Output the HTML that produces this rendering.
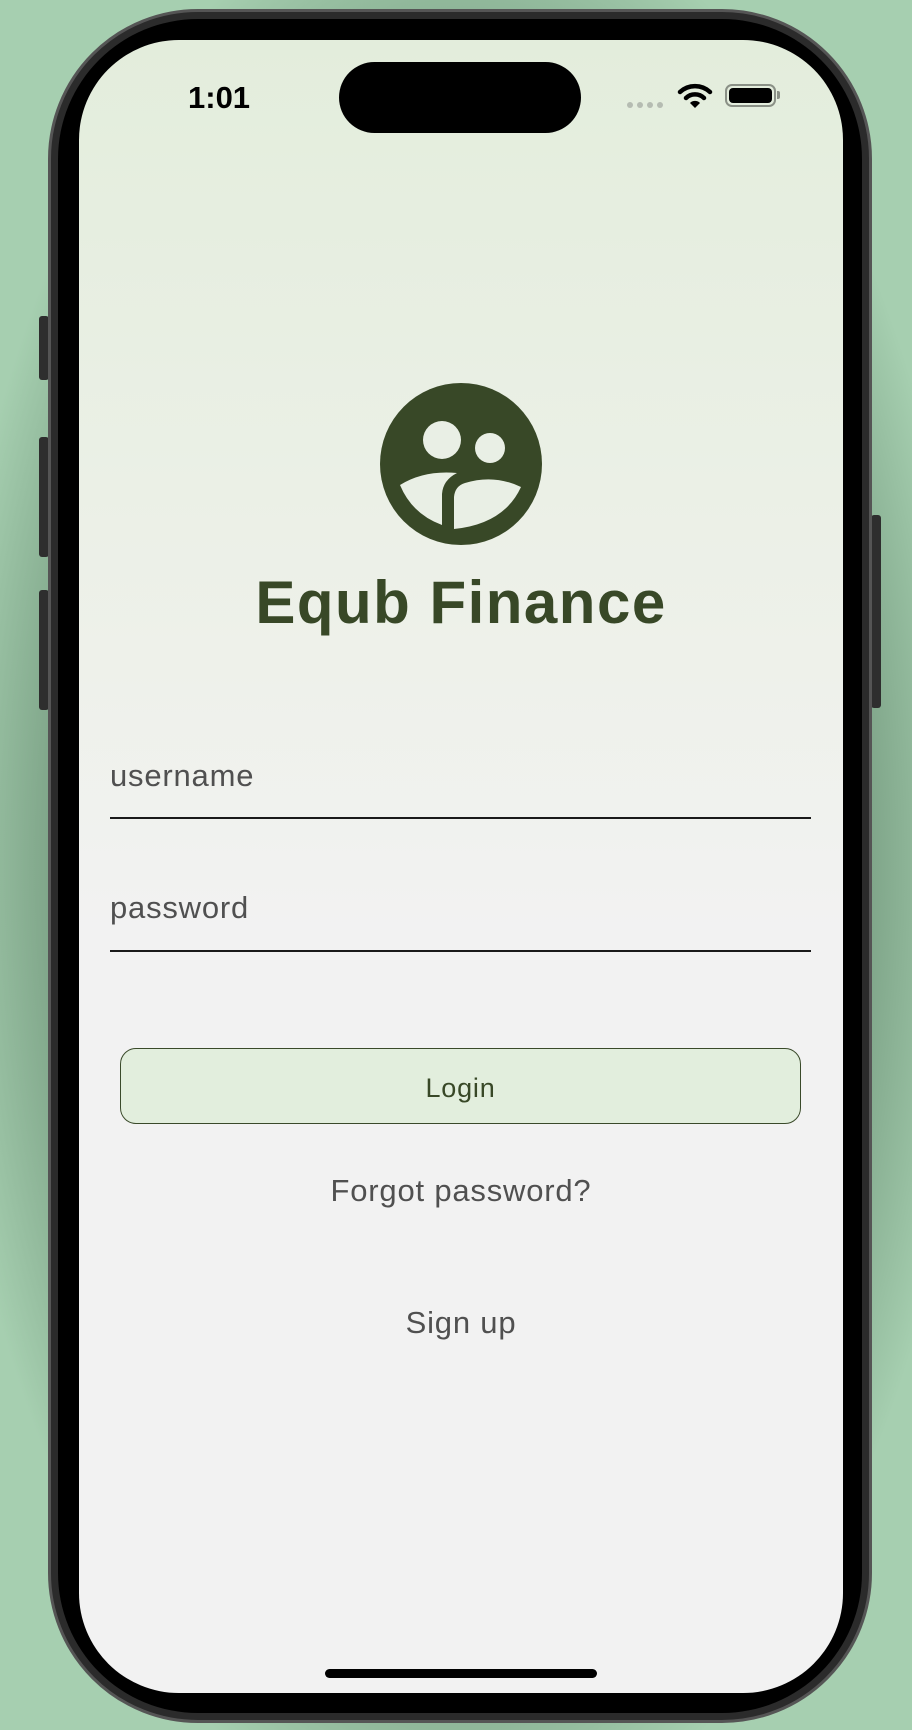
<!DOCTYPE html>
<html><head><meta charset="utf-8"><style>
*{margin:0;padding:0;box-sizing:border-box}
body{width:912px;height:1730px;overflow:hidden;position:relative;font-family:"Liberation Sans",sans-serif;
background:radial-gradient(ellipse 520px 980px at 460px 865px,#4f6a55 0%,#6f9479 70%,#a6cfb0 100%);}
.phone{position:absolute;left:48px;top:9px;width:824px;height:1714px;border-radius:150px;background:#2b2b2b;border:3px solid #555;}
.bezel{position:absolute;left:58px;top:19px;width:804px;height:1694px;border-radius:140px;background:#000;}
.screen{position:absolute;left:79px;top:40px;width:764px;height:1653px;border-radius:100px;overflow:hidden;
background:linear-gradient(#e3eddc 0px,#eef1ea 620px,#f2f2f2 900px,#f2f2f2 100%);}
.btn{position:absolute;background:#2e2e2e;border-radius:3px;}
.abs{position:absolute}
.island{left:260px;top:22px;width:242px;height:71px;border-radius:36px;background:#000}
.t{position:absolute;left:0;width:764px;text-align:center}
.lbl{font-size:31px;color:#505050;letter-spacing:0.8px}
</style></head><body>
<div class="btn" style="left:39px;top:316px;width:10px;height:64px"></div>
<div class="btn" style="left:39px;top:437px;width:10px;height:120px"></div>
<div class="btn" style="left:39px;top:590px;width:10px;height:120px"></div>
<div class="btn" style="left:871px;top:515px;width:10px;height:193px"></div>
<div class="phone"></div>
<div class="bezel"></div>
<div class="screen">
 <div class="abs island"></div>
 <div class="abs" style="left:109px;top:40px;font-size:31px;font-weight:bold;color:#000">1:01</div>
 <div class="abs" style="left:548px;top:62px;width:36px;height:6px;display:flex;gap:4px">
  <span style="width:6px;height:6px;border-radius:3px;background:#b5bcb2"></span><span style="width:6px;height:6px;border-radius:3px;background:#b5bcb2"></span><span style="width:6px;height:6px;border-radius:3px;background:#b5bcb2"></span><span style="width:6px;height:6px;border-radius:3px;background:#b5bcb2"></span></div>
 <svg class="abs" style="left:598px;top:42px" width="36" height="28" viewBox="0 0 36 28">
  <path d="M3 10 A22 22 0 0 1 33 10" stroke="#000" stroke-width="4.5" fill="none" stroke-linecap="round"/>
  <path d="M9 16 A13 13 0 0 1 27 16" stroke="#000" stroke-width="4.5" fill="none" stroke-linecap="round"/>
  <path d="M13 21 L18 26 L23 21 A7 7 0 0 0 13 21Z" fill="#000"/></svg>
 <div class="abs" style="left:646px;top:44px;width:51px;height:23px;border:2px solid #8a9086;border-radius:7px;padding:2px"><div style="width:100%;height:100%;background:#000;border-radius:4px"></div></div>
 <div class="abs" style="left:698px;top:51px;width:3px;height:8px;background:#8a9086;border-radius:0 2px 2px 0"></div>

 <svg class="abs" style="left:300px;top:342px" width="164" height="164" viewBox="0 0 164 164">
  <circle cx="82" cy="82" r="81" fill="#384827"/>
  <circle cx="63" cy="58" r="19" fill="#e9efe5"/>
  <circle cx="111" cy="66" r="15" fill="#e9efe5"/>
  <path d="M21 103 Q45 88 78 91 Q64 98 63 112 L63 143 Q33 132 21 103Z" fill="#e9efe5"/>
  <path d="M75 115 Q76 104 86 101 Q115 92 142 105 Q125 142 75 147Z" fill="#e9efe5"/>
 </svg>
 <div class="t" style="top:528px;font-size:60px;font-weight:bold;color:#384827;letter-spacing:1.5px">Equb Finance</div>

 <div class="abs lbl" style="left:31px;top:718px">username</div>
 <div class="abs" style="left:31px;top:777px;width:701px;height:2px;background:#1a1a1a"></div>
 <div class="abs lbl" style="left:31px;top:850px">password</div>
 <div class="abs" style="left:31px;top:910px;width:701px;height:2px;background:#1a1a1a"></div>

 <div class="abs" style="left:41px;top:1008px;width:681px;height:76px;border:1.5px solid #3a4a2a;border-radius:16px;background:#e2eedd;text-align:center;line-height:78px;font-size:27px;letter-spacing:0.8px;color:#384827">Login</div>
 <div class="t lbl" style="top:1133px">Forgot password?</div>
 <div class="t lbl" style="top:1265px">Sign up</div>
 <div class="abs" style="left:246px;top:1629px;width:272px;height:9px;border-radius:5px;background:#000"></div>
</div>
</body></html>
